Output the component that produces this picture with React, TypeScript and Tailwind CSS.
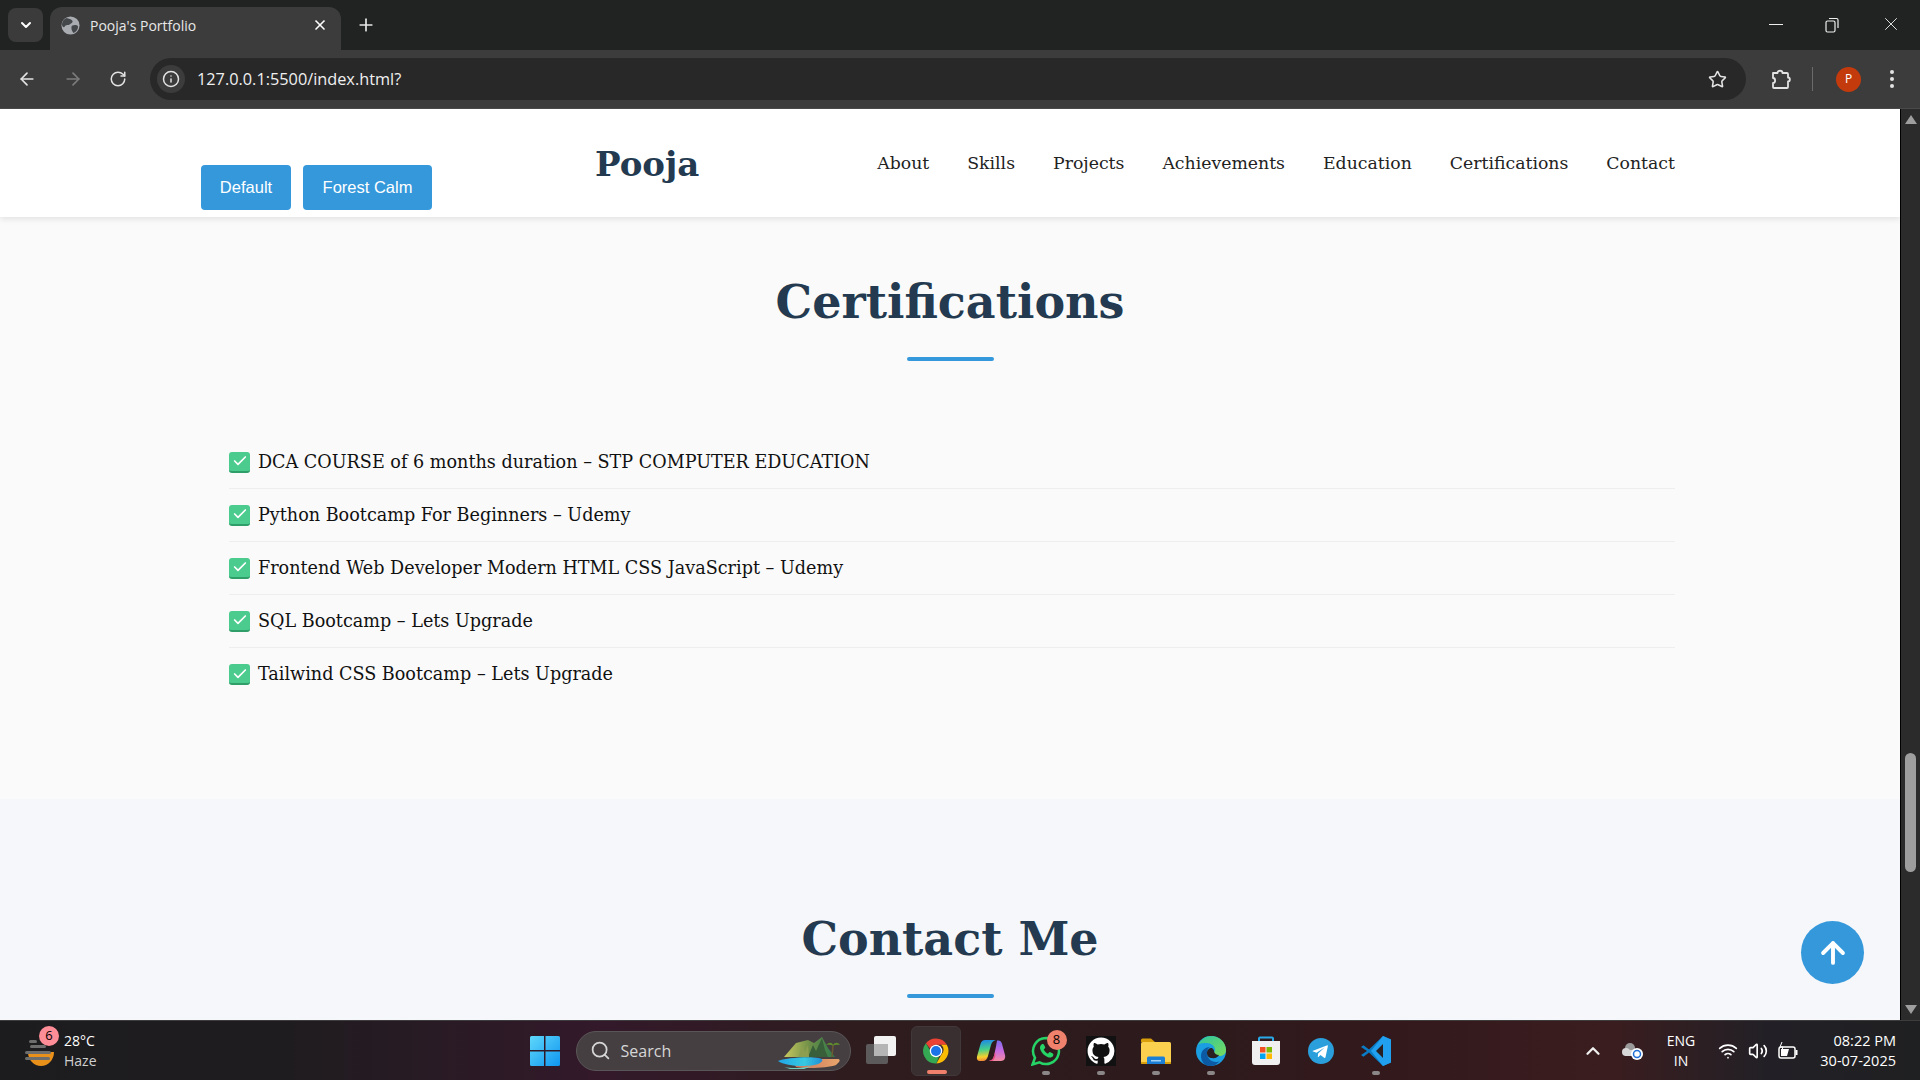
import { ArrowLeft, ArrowRight, ArrowUp, Check, ChevronDown, ChevronUp, Info, Plus, RotateCw, Search, Star, Volume2, Wifi, X } from "lucide-react";

const navLinks = ["About", "Skills", "Projects", "Achievements", "Education", "Certifications", "Contact"];

const certifications = [
  "DCA COURSE of 6 months duration – STP COMPUTER EDUCATION",
  "Python Bootcamp For Beginners – Udemy",
  "Frontend Web Developer Modern HTML CSS JavaScript – Udemy",
  "SQL Bootcamp – Lets Upgrade",
  "Tailwind CSS Bootcamp – Lets Upgrade",
];

const serif = "font-['DejaVu_Serif',serif]";
const ui = "font-['Open_Sans',sans-serif]";

const WindowsLogo = () => (
  <svg width="30" height="30" viewBox="0 0 30 30">
    <defs>
      <linearGradient id="win" x1="0" y1="0" x2="1" y2="1">
        <stop offset="0" stopColor="#5fd8fb" />
        <stop offset="1" stopColor="#0f95f0" />
      </linearGradient>
    </defs>
    <path d="M0 1.5A1.5 1.5 0 0 1 1.5 0H14v14H0zM15.500 0H28.500A1.500 1.500 0 0 1 30 1.500V14H15.500zM0 15.500H14V30H1.500A1.500 1.500 0 0 1 0 28.500zM15.500 15.500H30V28.500A1.500 1.500 0 0 1 28.500 30H15.500z" fill="url(#win)" />
  </svg>
);

const TaskView = () => (
  <svg width="30" height="30" viewBox="0 0 30 30">
    <rect x="0" y="8" width="22" height="20" rx="2" fill="#5c5a5a" />
    <rect x="8" y="0" width="22" height="20" rx="2" fill="#f2f2f2" />
    <rect x="8" y="8" width="14" height="12" fill="#b5b5b5" />
  </svg>
);

const ChromeLogo = () => (
  <svg width="30" height="30" viewBox="0 0 48 48">
    <path d="M24 4a20 20 0 0 1 17.300 10H24a10 10 0 0 0-9.300 6.400L7.800 11.500A20 20 0 0 1 24 4z" fill="#ea4335" />
    <path d="M41.300 14A20 20 0 0 1 24.500 44l8.300-14.500A10 10 0 0 0 32 14z" fill="#fbbc04" />
    <path d="M7.800 11.500l8.900 15.400a10 10 0 0 0 12.100 5.800L24.500 44A20 20 0 0 1 7.800 11.500z" fill="#34a853" />
    <circle cx="24" cy="24" r="10" fill="#fff" />
    <circle cx="24" cy="24" r="8" fill="#1a73e8" />
  </svg>
);

const CopilotLogo = () => (
  <svg width="30" height="30" viewBox="0 0 30 30">
    <defs>
      <linearGradient id="cop1" x1="0.3" y1="0" x2="0.4" y2="1">
        <stop offset="0" stopColor="#1e88e8" />
        <stop offset="0.45" stopColor="#45d08a" />
        <stop offset="0.8" stopColor="#f7d02c" />
        <stop offset="1" stopColor="#f0803a" />
      </linearGradient>
      <linearGradient id="cop2" x1="0.5" y1="0" x2="0.5" y2="1">
        <stop offset="0" stopColor="#7a6df0" />
        <stop offset="0.5" stopColor="#c96be0" />
        <stop offset="1" stopColor="#f28aa0" />
      </linearGradient>
    </defs>
    <path d="M9 4h11c-3 .5-4.500 3-5.300 6L12 20c-.8 3-2.500 5-5 5H4c-2.500 0-3.600-2-3-4.500L4.500 8C5.300 5.500 6.800 4 9 4z" fill="url(#cop1)" />
    <path d="M21 4.500h1.500c1.500 0 2.800 1 3.400 3L29 19c.8 3-.8 6-4 6H13c3-.5 4.500-2.500 5.200-6l2-9.500c.3-2 .6-4 .8-5z" fill="url(#cop2)" />
    <path d="M13 25c3-.5 4.500-2.500 5.200-6l.8-3c1 4-.5 8-3 9z" fill="#e8457a" />
  </svg>
);

const WhatsAppLogo = () => (
  <svg width="30" height="30" viewBox="0 0 30 30">
    <path d="M15 2a13 13 0 0 0-11 19.800L1.500 28.500l7-2.200A13 13 0 1 0 15 2z" fill="none" stroke="#25d366" strokeWidth="2.500" />
    <path d="M10.500 8.500c-1.500 1-2 3-1 5.500 1.200 3 4 5.800 7 7 2.500 1 4.500.5 5.500-1 .6-1 .5-2-.2-2.500l-2.500-1.300c-.6-.3-1.200 0-1.600.5l-.7 1c-1.800-.7-3.500-2.400-4.300-4.300l1-.8c.5-.4.7-1 .4-1.600l-1.200-2.400c-.4-.7-1.400-.8-2.400-.1z" fill="#25d366" />
  </svg>
);

const GithubLogo = () => (
  <div className="flex h-[30px] w-[30px] items-center justify-center bg-[#111]">
    <svg width="28" height="28" viewBox="0 0 24 24" fill="#fff">
      <path d="M12 .5C5.650.5.500 5.650.500 12c0 5.080 3.290 9.390 7.860 10.910.58.100.79-.25.790-.56v-2.140c-3.200.7-3.870-1.360-3.870-1.360-.52-1.330-1.280-1.680-1.280-1.680-1.040-.71.080-.7.080-.7 1.150.08 1.760 1.180 1.760 1.180 1.030 1.760 2.690 1.250 3.340.96.100-.74.400-1.250.730-1.540-2.550-.29-5.240-1.280-5.240-5.690 0-1.260.45-2.290 1.180-3.090-.12-.29-.51-1.460.110-3.050 0 0 .97-.31 3.170 1.180a11 11 0 0 1 5.770 0c2.200-1.490 3.170-1.180 3.170-1.180.62 1.590.23 2.760.110 3.050.74.800 1.180 1.830 1.180 3.090 0 4.420-2.690 5.390-5.250 5.680.41.360.78 1.060.78 2.140v3.170c0 .31.210.67.800.56A11.510 11.510 0 0 0 23.500 12C23.500 5.650 18.350.5 12 .5z" />
    </svg>
  </div>
);

const FolderLogo = () => (
  <svg width="30" height="30" viewBox="0 0 30 30">
    <path d="M0 4a1.500 1.500 0 0 1 1.500-1.500H10l4 3.500h-14z" fill="#d99e0b" />
    <rect x="0" y="6" width="30" height="22" rx="1.500" fill="#fcd04f" />
    <path d="M0 26h30v.500a1.500 1.500 0 0 1-1.500 1.500H1.500A1.500 1.500 0 0 1 0 26.500z" fill="#d99e0b" />
    <path d="M6 28v-6a1.500 1.500 0 0 1 1.500-1.500h15a1.500 1.500 0 0 1 1.500 1.500v6z" fill="#1b7fd6" />
    <rect x="10" y="24" width="10" height="1.500" fill="#9fd0f5" />
  </svg>
);

const EdgeLogo = () => (
  <svg width="30" height="30" viewBox="0 0 30 30">
    <defs>
      <linearGradient id="edge1" x1="0" y1="0" x2="1" y2="1">
        <stop offset="0" stopColor="#2cc4a0" />
        <stop offset="1" stopColor="#7bdc5c" />
      </linearGradient>
    </defs>
    <circle cx="15" cy="15" r="15" fill="#1b9de2" />
    <path d="M2 9C5 3 10 0 15 0c8 0 15 6 15 14 0 4-3 6-7 6-3 0-5-1-5-3 0-1 1-2 1-3 0-4-4-7-8-7-4 0-7 0-9 2z" fill="url(#edge1)" />
    <path d="M24 25c-3 3-6 5-10 5-6 0-9-5-9-10 0-6 5-9 9-9-2 1-3 3-3 6 0 5 4 9 9 9 1 0 3-.4 4-1z" fill="#0c59a4" />
    <path d="M11 17c0-3 2-5 5-5 1 1 2 2 2 3 0 2 2 4 5 4-1 2-4 4-7 3-3 0-5-2-5-5z" fill="#2b2021" />
  </svg>
);

const StoreLogo = () => (
  <svg width="30" height="30" viewBox="0 0 30 30">
    <path d="M8 6V2.500a1 1 0 0 1 1-1h12a1 1 0 0 1 1 1V6" fill="none" stroke="#29a9e8" strokeWidth="2" />
    <path d="M1 5h28v21a3 3 0 0 1-3 3H4a3 3 0 0 1-3-3z" fill="#f0f0f0" />
    <rect x="9" y="11" width="5.500" height="5.500" fill="#f25022" />
    <rect x="15.500" y="11" width="5.500" height="5.500" fill="#7fba00" />
    <rect x="9" y="17.500" width="5.500" height="5.500" fill="#00a4ef" />
    <rect x="15.500" y="17.500" width="5.500" height="5.500" fill="#ffb900" />
  </svg>
);

const TelegramLogo = () => (
  <svg width="30" height="30" viewBox="0 0 30 30">
    <circle cx="15" cy="15" r="13" fill="#2a9fdc" />
    <path d="M7 14.800l13.800-5.400c.7-.2 1.200.2 1 1.100l-2.300 10.700c-.2.800-.7 1-1.400.6l-3.600-2.700-1.800 1.700c-.3.300-.5.400-.9.300l.3-3.600 6.500-5.900-8.100 5.100-3.400-1.100c-.8-.3-.8-.6-.1-.8z" fill="#fff" />
  </svg>
);

const VSCodeLogo = () => (
  <svg width="30" height="30" viewBox="0 0 30 30">
    <path d="M22 0l8 3.500v23L22 30 8 16.500l-5.500 4.300L0 19l6-4-6-4 2.500-1.800L8 13.500z" fill="#0a7cc5" />
    <path d="M22 0l8 3.500v23L22 30l-12-15z" fill="#21a0ef" />
    <path d="M22 8l-7 7 7 7z" fill="#2b2021" />
  </svg>
);

const Island = () => (
  <svg className="absolute right-[6px] top-[5px]" width="66" height="32" viewBox="0 0 66 32">
    <defs>
      <linearGradient id="lagoon" x1="0" y1="0" x2="1" y2="0">
        <stop offset="0" stopColor="#1fa6e8" />
        <stop offset="0.6" stopColor="#38c8e0" />
        <stop offset="1" stopColor="#1f8fd8" />
      </linearGradient>
      <linearGradient id="sand" x1="0" y1="0" x2="1" y2="0">
        <stop offset="0" stopColor="#c96f5a" />
        <stop offset="1" stopColor="#e8a66c" />
      </linearGradient>
      <linearGradient id="hill" x1="0" y1="0" x2="1" y2="0">
        <stop offset="0" stopColor="#c8c860" />
        <stop offset="0.5" stopColor="#6f8f48" />
        <stop offset="1" stopColor="#2f7a4c" />
      </linearGradient>
    </defs>
    <path d="M6 20L18 6l12-3 6 3 8-6 6 11 7 9H6z" fill="url(#hill)" />
    <path d="M30 20l5-12 3 6 6-13 3 12 3 7z" fill="#395f3a" />
    <path d="M20 20l4-10 3 5 3-7 1 12z" fill="#8d9e50" />
    <path d="M14 22h46c2 0 2 2 1 3l-3 3c-8 3-30 4-40 2z" fill="url(#sand)" />
    <path d="M0 24c6-3 30-5 41-3 5 1 4 4-1 6-8 3-32 3-40-3z" fill="url(#lagoon)" />
    <path d="M6 30c8 2 20 1 28-1l-8 3H12z" fill="#6fd0c0" />
    <path d="M54 20l1-12" stroke="#6d5a30" strokeWidth="1.500" fill="none" />
    <path d="M48 8c3-3 6-3 7 0 2-3 5-3 7 0-2-.5-5-.5-7 .5-2-1-5-1-7-.5z" fill="#5f8f2c" />
  </svg>
);

const TaskIcon = ({ children, badge, pinned }: { children: React.ReactNode; badge?: string; pinned?: boolean }) => (
  <div className="relative h-[30px] w-[30px] shrink-0">
    {children}
    {badge && (
      <span className={`${ui} absolute right-[-6px] top-[-6px] flex h-5 w-5 items-center justify-center rounded-full bg-[#f0816c] text-[13px] text-black`}>
        {badge}
      </span>
    )}
    {pinned && <span className="absolute left-[11px] top-[35px] h-1 w-2 rounded-sm bg-[#8b8788]" />}
  </div>
);

const BrowserChrome = () => (
  <div className={`${ui} shrink-0`}>
    <div className="flex h-[50px] bg-[#212323] pl-2 pr-0">
      <div className="mt-2 flex h-[34px] w-[35px] items-center justify-center rounded-lg bg-[#3b3b3b] text-white">
        <ChevronDown size={16} strokeWidth={3} />
      </div>
      <div className="ml-[7px] mt-[7px] flex h-[43px] w-[291px] items-center rounded-t-xl bg-[#3c3c3c] pb-[7px] pl-[11px] text-white">
        <svg width="19" height="19" viewBox="0 0 20 20">
          <circle cx="10" cy="10" r="9.500" fill="#a9adb1" />
          <path d="M6 2c2 1 5 1 6 3s-2 3-3 4-4 0-5 2-3 0-3-2c0-3 2-6 5-7zM12 10c2-1 5-1 6 1 0 3-2 6-5 7-1-2-2-3-2-5s0-2 1-3z" fill="#45484b" />
        </svg>
        <span className="ml-[10px] text-[14px] text-[#e8e8e8]">Pooja's Portfolio</span>
        <X size={16} strokeWidth={2.5} className="ml-auto mr-[13px]" />
      </div>
      <Plus size={20} strokeWidth={2} className="ml-[15px] mt-[15px] text-[#e8e8e8]" />
      <div className="ml-auto flex items-start text-[#eee]">
        <span className="mr-[42px] mt-[24px] h-px w-[14px] bg-[#eee]" />
        <svg className="mr-[41px] mt-[17px]" width="14" height="16" viewBox="0 0 14 16" fill="none" stroke="#eee" strokeWidth="1.200">
          <rect x="1" y="4" width="9" height="11" rx="1.500" />
          <path d="M4 1.500h7.500a1.500 1.500 0 0 1 1.500 1.500v8" />
        </svg>
        <X size={22} strokeWidth={1} className="mr-[18px] mt-[13px]" />
      </div>
    </div>
    <div className="flex h-[59px] items-center border-b border-[#4a4a4a] bg-[#3c3c3c] text-[#e3e3e3]">
      <ArrowLeft size={20} className="ml-[17px]" />
      <ArrowRight size={20} className="ml-[26px] text-[#7c7c7c]" />
      <RotateCw size={18} className="ml-[26px]" />
      <div className="ml-[23px] flex h-[42px] w-[1596px] items-center rounded-full bg-[#282828] pl-[7px]">
        <span className="flex h-[28px] w-[28px] items-center justify-center rounded-full bg-[#3c3c3c]">
          <Info size={18} />
        </span>
        <span className="ml-[12px] text-[16.3px] text-[#f0f0f0]">127.0.0.1:5500/index.html?</span>
        <Star size={19} className="ml-auto mr-[19px]" />
      </div>
      <svg className="ml-[25px]" width="20" height="22" viewBox="0 0 20 22" fill="none" stroke="#e3e3e3" strokeWidth="1.800" strokeLinejoin="round">
        <path d="M2 5h4.500c0-3 5-3 5 0H16a1 1 0 0 1 1 1v3.500c2.500 0 2.500 4 0 4V19a1 1 0 0 1-1 1H3a1 1 0 0 1-1-1v-4c2.800 0 2.800-5 0-5z" />
      </svg>
      <span className="ml-[21px] h-[24px] w-px bg-[#6a6a6a]" />
      <span className="ml-[23px] flex h-[25px] w-[25px] items-center justify-center rounded-full bg-[#c33a0d] text-[12px] text-white">P</span>
      <span className="ml-[29px] flex flex-col gap-[3px]">
        <span className="h-1 w-1 rounded-full bg-[#e3e3e3]" />
        <span className="h-1 w-1 rounded-full bg-[#e3e3e3]" />
        <span className="h-1 w-1 rounded-full bg-[#e3e3e3]" />
      </span>
    </div>
  </div>
);

const Taskbar = () => (
  <div className={`${ui} relative flex h-[60px] shrink-0 items-center border-t border-[#3e3c3d] bg-[linear-gradient(90deg,#1c1c1e_0%,#1f1c1f_15%,#33192a_31%,#2e1c1e_45%,#2c1a1c_60%,#33191c_72%,#3a1d1f_84%,#222026_92%,#1f2022_100%)] text-white`}>
    <div className="relative ml-[25px] flex h-[30px] w-[30px] items-end">
      <svg width="30" height="26" viewBox="0 0 30 26">
        <path d="M3 12h26c0 8-6 14-13 14S3 20 3 12z" fill="#e8901a" />
        <rect x="4" y="0" width="8" height="3" rx="1.500" fill="#6d6d6d" />
        <rect x="5" y="5" width="16" height="3" rx="1.500" fill="#6d6d6d" />
        <rect x="0" y="11" width="26" height="3" rx="1.500" fill="#6d6d6d" />
        <rect x="0" y="17" width="25" height="3" rx="1.500" fill="#6d6d6d" />
      </svg>
      <span className="absolute left-[14px] top-[-10px] flex h-5 w-5 items-center justify-center rounded-full bg-[#ff8d97] text-[13px] text-black">6</span>
    </div>
    <div className="ml-[9px] flex flex-col text-[14px] leading-5">
      <span>28°C</span>
      <span className="text-[#cfcfcf]">Haze</span>
    </div>

    <div className="ml-[433px] shrink-0">
      <WindowsLogo />
    </div>
    <div className="relative ml-[16px] flex h-10 w-[275px] items-center rounded-full border border-[#5a5657] bg-[#453f41] pl-[13px] text-[#d6d6d6]">
      <Search size={21} strokeWidth={2} />
      <span className="ml-[10px] text-[16px]">Search</span>
      <Island />
    </div>
    <div className="ml-[15px] shrink-0">
      <TaskView />
    </div>
    <div className="relative ml-[15px] flex h-[50px] w-[50px] items-center justify-center rounded-md border border-[#40383a] bg-[#392e30]">
      <ChromeLogo />
      <span className="absolute bottom-[1px] left-[15px] h-1 w-5 rounded-sm bg-[#f0806c]" />
    </div>
    <div className="ml-[15px] flex items-center gap-[25px]">
      <TaskIcon><CopilotLogo /></TaskIcon>
      <TaskIcon badge="8" pinned><WhatsAppLogo /></TaskIcon>
      <TaskIcon pinned><GithubLogo /></TaskIcon>
      <TaskIcon pinned><FolderLogo /></TaskIcon>
      <TaskIcon pinned><EdgeLogo /></TaskIcon>
      <TaskIcon><StoreLogo /></TaskIcon>
      <TaskIcon><TelegramLogo /></TaskIcon>
      <TaskIcon pinned><VSCodeLogo /></TaskIcon>
    </div>

    <div className="ml-auto flex items-center pr-[24px]">
      <ChevronUp size={22} strokeWidth={2.5} className="text-[#f0f0f0]" />
      <svg className="ml-[18px]" width="22" height="18" viewBox="0 0 22 18">
        <circle cx="8" cy="6" r="5" fill="#9a9a9a" />
        <circle cx="4" cy="10" r="4" fill="#d8d8d8" />
        <rect x="3" y="8" width="11" height="6" fill="#d8d8d8" />
        <circle cx="15" cy="12" r="6" fill="#fff" />
        <circle cx="15" cy="12" r="3.500" fill="none" stroke="#1f6fd6" strokeWidth="1.500" />
      </svg>
      <div className="ml-[19px] flex w-[36px] flex-col items-center text-[14px] leading-5">
        <span>ENG</span>
        <span>IN</span>
      </div>
      <Wifi size={20} className="ml-[19px]" />
      <Volume2 size={20} className="ml-[10px]" />
      <svg className="ml-[10px]" width="20" height="18" viewBox="0 0 20 18">
        <rect x="1" y="5" width="16" height="11" rx="2" fill="none" stroke="#fff" strokeWidth="1.500" />
        <rect x="17.500" y="8" width="2" height="5" fill="#fff" />
        <path d="M3 7h8l-2 7H3z" fill="#fff" />
        <path d="M4 0L2 5h3l-1 3" stroke="#fff" fill="none" />
      </svg>
      <div className="ml-[20px] flex w-[78px] flex-col items-end text-[14.5px] leading-5">
        <span>08:22 PM</span>
        <span className="whitespace-nowrap">30-07-2025</span>
      </div>
    </div>
  </div>
);

const SectionTitle = ({ title }: { title: string }) => (
  <div className="flex flex-col items-center">
    <h2 className={`${serif} text-[46px] font-bold leading-[60px] text-[#233a50]`}>{title}</h2>
    <span className="mt-[25px] h-1 w-[87px] rounded-sm bg-[#3498db]" />
  </div>
);

const Scrollbar = () => (
  <div className="flex w-5 shrink-0 flex-col items-center justify-between border-l border-black bg-[#2b2b2b] py-[6px]">
    <span className="h-0 w-0 border-x-[6px] border-b-[9px] border-x-transparent border-b-[#9e9e9e]" />
    <span className="absolute right-[4px] top-[753px] h-[119px] w-[11px] rounded-full bg-[#9e9e9e]" />
    <span className="h-0 w-0 border-x-[6px] border-t-[9px] border-x-transparent border-t-[#9e9e9e]" />
  </div>
);

export default function App() {
  return (
    <div className="relative flex h-[1080px] w-[1920px] flex-col overflow-hidden">
      <BrowserChrome />
      <div className="flex min-h-0 flex-1">
        <div className="relative min-w-0 flex-1 overflow-hidden bg-[#f5f7fa]">
          <header className="relative z-10 flex h-[108px] bg-white pl-[201px] pr-[225px] shadow-[0_2px_6px_rgba(0,0,0,0.1)]">
            <div className="mt-[56px] flex h-[45px] gap-3">
              <button className="w-[90px] rounded-[4px] bg-[#3498db] font-['Liberation_Sans',sans-serif] text-[16.5px] text-white">Default</button>
              <button className="w-[129px] rounded-[4px] bg-[#3498db] font-['Liberation_Sans',sans-serif] text-[16.5px] text-white">Forest Calm</button>
            </div>
            <span className={`${serif} ml-[163px] mt-[31px] text-[34px] font-bold leading-[48px] text-[#233a50]`}>Pooja</span>
            <nav className={`${serif} ml-auto flex gap-[38px] pt-[41px] text-[17.3px] leading-[26px] text-[#222]`}>
              {navLinks.map((link) => (
                <a key={link}>{link}</a>
              ))}
            </nav>
          </header>

          <section className="h-[582px] bg-[#fafafa] pt-[55px]">
            <SectionTitle title="Certifications" />
            <ul className="ml-[229px] mr-[225px] mt-[75px]">
              {certifications.map((cert) => (
                <li key={cert} className={`${serif} flex h-[53px] items-center gap-2 border-b border-[#eeeeee] text-[17.6px] text-[#111] last:border-0`}>
                  <span className="flex h-[21px] w-[21px] items-center justify-center rounded-[3px] border-b-2 border-[#2f9e68] bg-[#4ccb8e] text-white">
                    <Check size={16} strokeWidth={2.5} />
                  </span>
                  {cert}
                </li>
              ))}
            </ul>
          </section>

          <section className="pt-[110px]">
            <SectionTitle title="Contact Me" />
          </section>

          <button className="absolute bottom-[36px] left-[1801px] flex h-[63px] w-[63px] items-center justify-center rounded-full bg-[#3498db] text-white">
            <ArrowUp size={34} strokeWidth={2.75} />
          </button>
        </div>
        <Scrollbar />
      </div>
      <Taskbar />
    </div>
  );
}
